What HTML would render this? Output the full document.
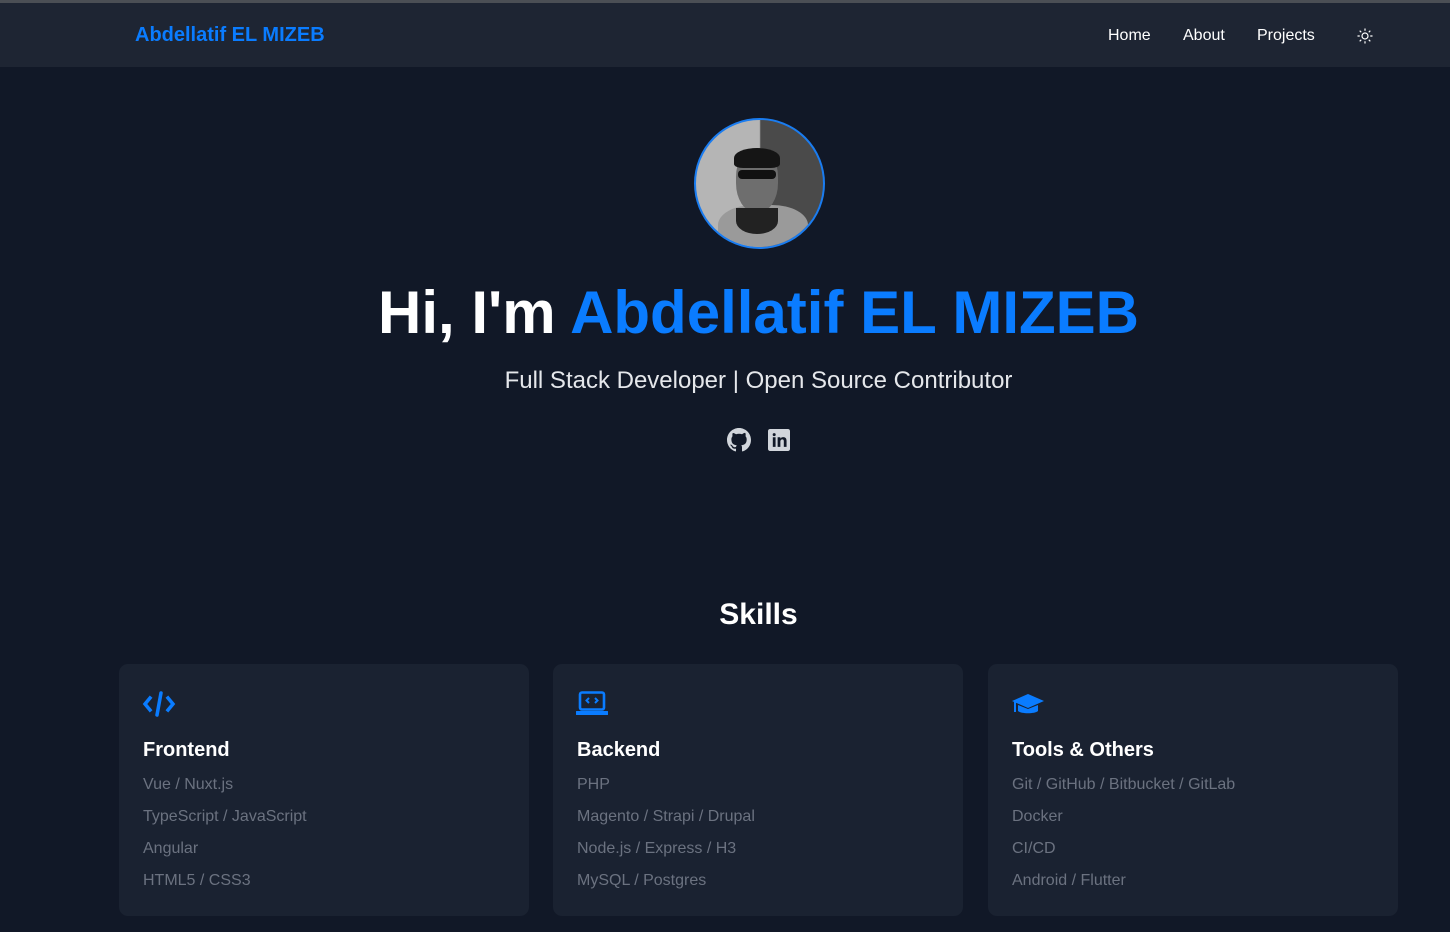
<!DOCTYPE html>
<html><head><meta charset="utf-8"><style>
*{margin:0;padding:0;box-sizing:border-box}
body{width:1450px;height:932px;overflow:hidden;background:#111827;font-family:"Liberation Sans",sans-serif;color:#fff;position:relative}
.top{position:absolute;top:0;left:0;width:1450px;height:3px;background:#4b4f55}
nav{position:absolute;top:3px;left:0;width:1450px;height:64px;background:#1e2533}
.logo{position:absolute;left:135px;top:21px;font-size:20px;font-weight:bold;color:#0a7cff}
.links{position:absolute;top:24px;font-size:16px;color:#fff}
.av{position:absolute;left:694px;top:118px;width:131px;height:131px;border-radius:50%;border:2px solid #1a7cf0;overflow:hidden;background:linear-gradient(90deg,#b5b5b5 0 50%,#4a4a4a 51% 100%)}
.av i{position:absolute;display:block}
h1{position:absolute;top:278px;left:0;width:1517px;text-align:center;font-size:60px;font-weight:bold}
h1 span{color:#0a7cff}
.sub{position:absolute;top:367px;left:0;width:1517px;text-align:center;font-size:24px;color:#e5e7eb}
h2{position:absolute;top:598px;left:0;width:1517px;text-align:center;font-size:30px;font-weight:bold}
.card{position:absolute;top:664px;width:410px;height:252px;background:#1a2231;border-radius:9px;padding:0 24px}
.card svg{position:absolute;left:23px;top:26px}
.card h3{position:absolute;top:75px;left:24px;font-size:20px;font-weight:bold}
.card ul{position:absolute;top:105px;left:24px;list-style:none;font-size:16px;color:#6b7280;line-height:32px}
</style></head><body>
<div class="top"></div>
<nav><div class="logo">Abdellatif EL MIZEB</div>
<div class="links" style="left:1108px">Home</div>
<div class="links" style="left:1183px">About</div>
<div class="links" style="left:1257px">Projects</div>
<svg style="position:absolute;left:1356px;top:24px" width="18" height="18" viewBox="0 0 24 24" fill="none" stroke="#fff" stroke-width="1.6"><circle cx="12" cy="12" r="4"/><path d="M12 2v3M12 19v3M2 12h3M19 12h3M4.9 4.9l2.1 2.1M17 17l2.1 2.1M4.9 19.1L7 17M17 7l2.1-2.1"/></svg>
</nav>
<div class="av">
<i style="left:22px;top:85px;width:90px;height:50px;border-radius:40% 40% 0 0;background:#9a9a9a"></i>
<i style="left:40px;top:28px;width:42px;height:64px;border-radius:45%;background:#6e6e6e"></i>
<i style="left:38px;top:28px;width:46px;height:20px;border-radius:50% 50% 20% 20%;background:#151515"></i>
<i style="left:42px;top:50px;width:38px;height:9px;border-radius:4px;background:#111"></i>
<i style="left:40px;top:88px;width:42px;height:26px;background:#222;border-radius:0 0 50% 50%"></i>
</div>
<h1>Hi, I'm <span>Abdellatif EL MIZEB</span></h1>
<div class="sub">Full Stack Developer | Open Source Contributor</div>
<svg style="position:absolute;left:727px;top:428px" width="24" height="24" viewBox="0 0 16 16" fill="#d1d5db"><path d="M8 0C3.58 0 0 3.58 0 8c0 3.540 2.290 6.530 5.470 7.590.4.07.55-.17.55-.38 0-.19-.01-.82-.01-1.490-2.010.37-2.530-.49-2.690-.94-.09-.23-.48-.94-.82-1.130-.28-.15-.68-.52-.01-.53.63-.01 1.080.58 1.230.82.72 1.210 1.870.87 2.330.66.07-.52.28-.87.51-1.070-1.780-.2-3.640-.89-3.640-3.950 0-.87.31-1.590.82-2.150-.08-.2-.36-1.020.08-2.120 0 0 .67-.21 2.200.82.64-.18 1.320-.27 2-.27.68 0 1.360.09 2 .27 1.530-1.040 2.200-.82 2.200-.82.44 1.100.16 1.920.08 2.120.51.56.82 1.270.82 2.150 0 3.070-1.870 3.750-3.650 3.950.29.25.54.73.54 1.480 0 1.070-.01 1.930-.01 2.200 0 .21.15.46.55.38A8.013 8.013 0 0016 8c0-4.420-3.580-8-8-8z"/></svg>
<svg style="position:absolute;left:768px;top:429px" width="22" height="22" viewBox="0 0 16 16"><rect width="16" height="16" rx="1.5" fill="#d1d5db"/><path d="M3.5 6h2v7h-2zM4.5 3a1.1 1.1 0 110 2.2 1.1 1.1 0 010-2.2zM7 6h2v1c.4-.7 1.2-1.1 2.1-1.1 1.7 0 2.4 1 2.4 2.8V13h-2V9c0-1-.3-1.5-1.1-1.5S9 8.1 9 9v4H7z" fill="#111827"/></svg>
<h2>Skills</h2>
<div class="card" style="left:119px">
<svg width="34" height="28" viewBox="0 0 34 28" fill="none" stroke="#0a7cff" stroke-width="3.5" stroke-linecap="square"><path d="M8 8l-5 6 5 6M26 8l5 6-5 6"/><path d="M19 3l-4 22" stroke-linecap="round"/></svg>
<h3>Frontend</h3><ul><li>Vue / Nuxt.js</li><li>TypeScript / JavaScript</li><li>Angular</li><li>HTML5 / CSS3</li></ul></div>
<div class="card" style="left:553px">
<svg width="32" height="28" viewBox="0 0 32 28" fill="none" stroke="#0a7cff" stroke-width="2.6"><rect x="4" y="2.5" width="24" height="17" rx="2"/><path d="M1 23h30" stroke-width="4" stroke-linecap="round"/><path d="M13 8l-2.5 2.5L13 13M19 8l2.5 2.5L19 13" stroke-width="2"/></svg>
<h3>Backend</h3><ul><li>PHP</li><li>Magento / Strapi / Drupal</li><li>Node.js / Express / H3</li><li>MySQL / Postgres</li></ul></div>
<div class="card" style="left:988px">
<svg width="34" height="28" viewBox="0 0 34 28" fill="#0a7cff"><path d="M17 4L1 11l16 7 16-7z"/><path d="M7 15v6c3 3 17 3 20 0v-6l-10 4z"/><rect x="3" y="12" width="2" height="10"/></svg>
<h3>Tools &amp; Others</h3><ul><li>Git / GitHub / Bitbucket / GitLab</li><li>Docker</li><li>CI/CD</li><li>Android / Flutter</li></ul></div>
</body></html>
